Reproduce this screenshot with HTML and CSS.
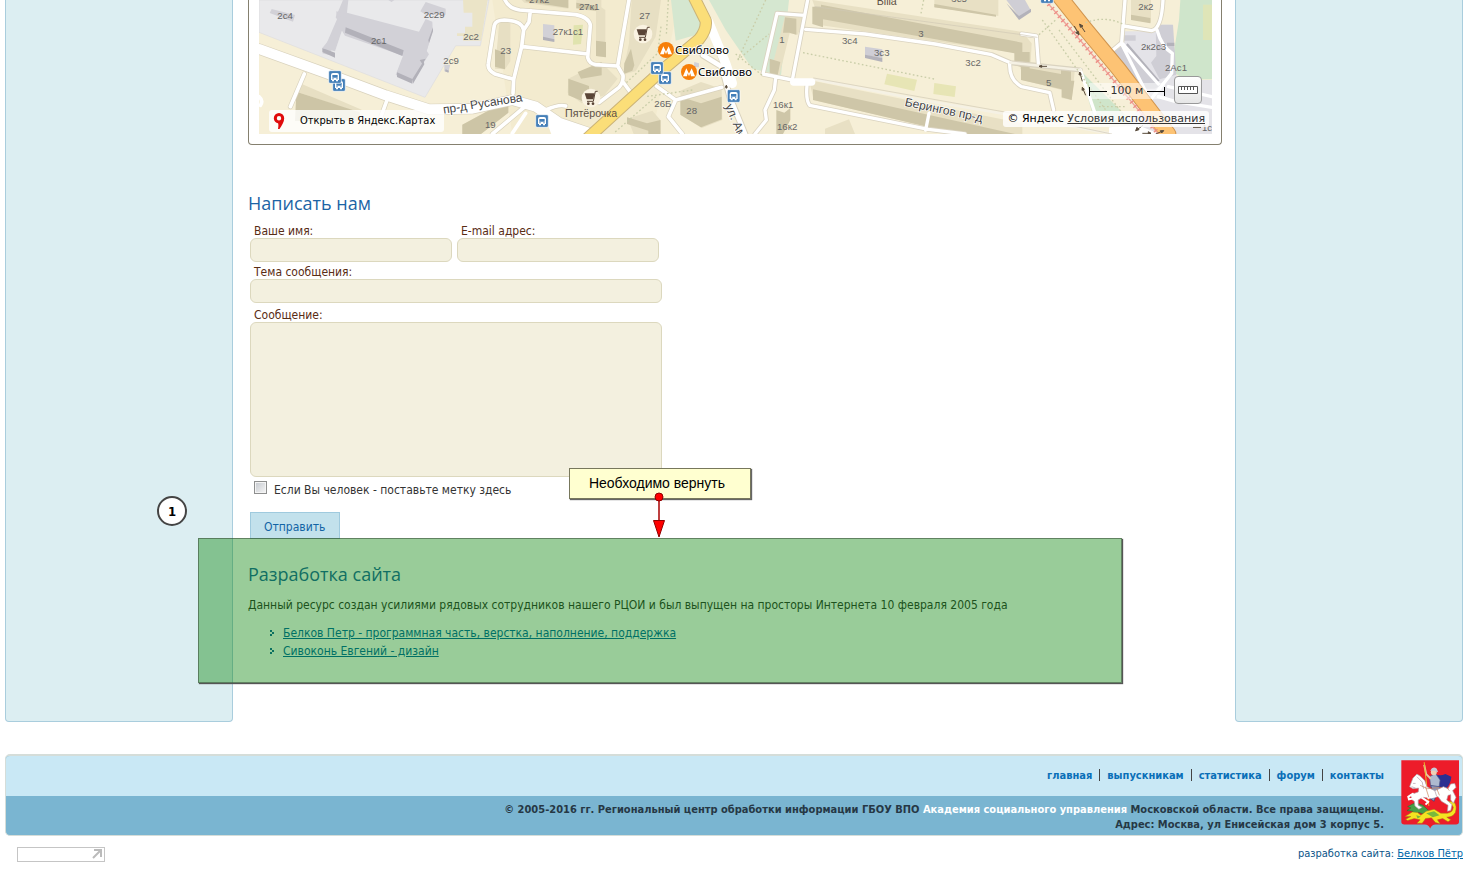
FILE: index.html
```html
<!DOCTYPE html>
<html lang="ru">
<head>
<meta charset="utf-8">
<title>Контакты</title>
<link rel="stylesheet" href="styles.css">
</head>
<body>
<div class="page">
  <div class="columns">
    <aside class="sidebar"></aside>
    <main class="content">
      <section class="map-box">
        <div class="map">
          <svg class="map-canvas" viewBox="0 0 2859 402" preserveAspectRatio="xMinYMin slice" aria-label="Карта">
            <defs>
              <g id="metro"><circle r="24" fill="#f77f09"/><path d="M-18 13L-8-11 0 5 8-11 18 13H6L4 4 0 13-4 4-6 13z" fill="#fff"/></g>
              <g id="bus"><rect x="-19" y="-19" width="38" height="38" rx="4" fill="#447fb8" stroke="#fff" stroke-width="2"/><path d="M-12-6q0-6 6-6H6q6 0 6 6V9H9v4H3V9h-6v4h-6V9h-3zM-8-6v8H8v-8zM-8 4v3h4V4zM4 4v3h4V4z" fill="#fff" fill-rule="evenodd"/></g>
              <g id="cart"><circle r="28" fill="#faf3e2"/><path d="M-19-14H11L7 4H-13Z" fill="#5a4537"/><path d="M20-20H13L7 10H-12" fill="none" stroke="#5a4537" stroke-width="3"/><circle cx="-8" cy="17" r="4" fill="#5a4537"/><circle cx="6" cy="17" r="4" fill="#5a4537"/></g>
            </defs>
            <rect width="2859" height="402" fill="#f6efd7"/>
            <path d="M700 0H1260L1180 402H760Z" fill="#f3ebcf"/>

            <!-- western half -->
            <path d="M0 0H690L664 137H590L498 292L0 97Z" fill="#e9e9eb" stroke="#dcdce0" stroke-width="2"/>
            <path d="M612 0h74l-20 122h-54v-14h-18v-8h24V80h22V38h-26z" fill="#ebe4c7"/>
            <path d="M1236 0H1325L1338 60L1310 105L1250 122Z M1350 0H1590L1566 226L1480 206L1400 90Z" fill="#d5e7d0"/>
            <g fill="#d2d1d7">
              <path d="M252 0h16l-4 38 216 57 20-38 20 8 1 28-18 60 7 10-18 28-32 50-50-16 22-58-174-60-10-16-38 74-20-5 44-102-4-6z"/>
              <path d="M252 82l-10 0-52 62 38 10zM436 165l-22 52 46 18 32-46 18-60-30-26z"/>
              <path d="M38 27l70 18-6 20-70-26zM484 34l16-28 60 20v18l-60 0zM852 72l34 4v46l-34-4zM556 194h18l-6 22-12-2zM1306 186l14 4v12h-16z"/>
              <path d="M388 0h18l-8 6zM232 34l38 10v10l-38-6z"/>
            </g>
            <g fill="#b2b1b9">
              <path d="M190 144l38 14v15l-38-17zM260 82l174 69-4 17-172-70zM414 217l46 20v14l-46-20zM460 237l34-54 2 10-34 58zM508 120l14-38v12l-12 36zM482 180l18-4-10 16zM852 110l34 8v8l-34-6zM560 208l10 4-2 6-10-4z"/>
            </g>
            <g fill="#e7dfc3">
              <path d="M112 275l18-22 178 76-6 10zM722 58l32-4v130l-16 24-30-2zM788 0h140v26L796 8zM952 0h75v22l12 8v142l-28-4V34l-60-8zM1118 0h88L1190 110 1130 214 1098 222 1096 196 1110 130zM928 236l98-50 50 50-40 50-68 24-42-32zM1106 356l74-24 26 30v40h-82zM1264 272l62-26 62 20 2 94-62 24-62-38zM610 374l120-66h18v30l-82 64h-56z"/>
            </g>
            <g fill="#cdc5a6">
              <path d="M112 275l190 62v26H108zM708 148l30 10v50l-30-8zM800 0h128v24L800 4zM952 8l60 10v14l-60-8zM1011 122l30 4v46l-30-4zM928 236l62 22v54l-62-26zM956 216l72-30v40l-62 10zM1096 190l20-44 10 50-6 16-26 10zM1104 352l60 18 40-10v42h-36v-10l-64-20zM1264 290l62 20 62-20v68l-62 24-62-38zM610 374l82-44 56-16v24l-82 64h-56z"/>
            </g>
            <path d="M944 76l28-2-6 58-24 2z" fill="#e0e3ae"/>

            <!-- eastern half -->
            <g transform="translate(1428 0)">
              <path d="M1140 402L1240 300 1120 160 1170 122 1170 94 1240 94 1280 74H1310L1326 240H1431V402Z" fill="#e4e3e8"/>
              <path d="M1336 0H1431V125L1410 120 1400 0H1431V238H1346L1308 210 1332 60Z" fill="#cfe5cb"/>
              <path d="M1404 14h27v106h-27z" fill="#dfe5b8"/>
              <path d="M1038 214L1196 370 1080 372Z" fill="#cfe5ca"/>
              <path d="M456 221l90 18-8 34-90-20zM598 249l65 10-4 32-64-9z" fill="#e7e5b5"/>
              <g fill="#e8e0c4">
                <path d="M232 0l630 96 28 34-4 78-30 0V160L258 76zM598 0h192v48L598 22zM150 48h62l-24 56-24-4-32 130-26-8zM222 240l640 130v32H670L236 300zM862 182l158 24-10 94-30-6v-24l-118-30zM1188 0h60v68l-60-10zM270 386l72-28 18 44h-90z"/>
              </g>
              <g fill="#cec6a8">
                <path d="M258 14l604 114v28h22v50l-46-10v-36L264 58v24l-32-10V20h26zM598 12l185 32v6L598 22zM104 176l32 10-8 40-24-6zM150 52l34 4v48l-20-6-20 0zM234 268L840 402H670L234 300zM858 200l120 22v-16h30v36h10l-8 58-30-8v-24l-122-28zM1188 44l58 10v16l-58-10zM124 330l24 8 18-14v36l-22 42h-20z"/>
              </g>
              <path d="M814 0h56l18 32-36 18zM390 140l52 8v26l-52-8zM1126 160l40-24 110 120-16 10H1210zM1262 74h52l10 150-50 14-26-50 16-20zM1166 106h36v16h-36z" fill="#cfced5"/>
              <path d="M814 10l38 38 36-22v10l-36 24zM390 164l52 10v12l-52-12zM1178 130l96 112-8 4-94-110zM1140 158l70 96-6 8-74-90zM1296 128h22v10h-22z" fill="#b3b2ba"/>
            </g>

            <!-- streets: soft edge first, then the white roadway -->
            <g fill="none" stroke-linejoin="round" stroke-linecap="round">
              <g stroke="#d9d2bd">
                <path d="M0 147L230 230 380 286 510 328 640 326 760 300 830 320 900 368 1000 402" stroke-width="34"/>
                <path d="M738 0Q750 26 782 30L950 44Q990 52 994 76L986 172Q990 190 1010 194L1076 198 1110 0M814 32L810 66 794 90M762 280L764 238 708 222Q684 210 688 190L706 76Q710 60 736 60Q790 62 794 90L788 140 764 238M792 140L986 162M1076 198L1092 226Q1094 246 1080 262L1020 308M1092 246L1120 284M1192 258L1250 300 1388 262M1250 300L1228 350 1270 402M136 222L94 320M384 300L366 350M800 318L700 402M860 330Q900 312 920 318" stroke-width="15"/>
                <path d="M1332 166L1388 200 1412 290 1458 402M1346 60L1390 180" stroke-width="20"/>
              </g>
              <g stroke="#fff">
                <path d="M0 147L230 230 380 286 510 328 640 326 760 300 830 320 900 368 1000 402" stroke-width="30"/>
                <path d="M860 350L1000 402H880Z" fill="#fff" stroke-width="6"/>
                <path d="M738 0Q750 26 782 30L950 44Q990 52 994 76L986 172Q990 190 1010 194L1076 198 1110 0M814 32L810 66 794 90M762 280L764 238 708 222Q684 210 688 190L706 76Q710 60 736 60Q790 62 794 90L788 140 764 238M792 140L986 162M1076 198L1092 226Q1094 246 1080 262L1020 308M1092 246L1120 284M1192 258L1250 300 1388 262M1250 300L1228 350 1270 402M136 222L94 320M384 300L366 350M800 318L700 402M860 330Q900 312 920 318M800 340L760 400M0 290Q14 302 4 316" stroke-width="11"/>
                <path d="M1332 166L1388 200 1412 290 1458 402" stroke-width="14"/>
                <path d="M1348 64L1375 130 1400 190 1420 250" stroke-width="28"/>
              </g>
              <g transform="translate(1428 0)">
                <g stroke="#dad3c0" stroke-width="15">
                  <path d="M208 46L126 40 84 222 172 240 218 0M212 88L390 102 600 132 770 164 826 188 1036 210M860 102L904 108 910 190M824 190Q822 240 860 260L944 278 956 330M122 234L118 270 90 330 94 360 60 402M216 256Q212 300 224 316L580 388 690 402M1170 0L1160 128 1122 160M1166 78L1250 92Q1280 86 1284 0"/>
                </g>
                <g stroke="#fff">
                  <path d="M208 46L126 40 84 222 172 240 218 0M212 88L390 102 600 132 770 164 826 188M860 102L904 108 910 190M824 190Q822 240 860 260L944 278 956 330M122 234L118 270 90 330 94 360 60 402M216 256Q212 300 224 316L580 388 690 402M582 340L572 390M1170 0L1160 128 1122 160M1166 78L1250 92Q1280 86 1284 0M1160 128L1270 252M1160 132L1240 290M1266 90Q1280 140 1312 160L1310 220 1246 300M1270 290L1320 304 1431 322M1036 210L1080 340M1300 260L1431 290" stroke-width="10"/>
                  <path d="M826 188L1036 210M240 238L560 300 860 350 1120 400" stroke="#f5f1e4" stroke-width="8"/>
                  <path d="M176 246H230" stroke-width="22"/>
                  <path d="M1124 402V384L1210 378 1270 402Z" fill="#fff" stroke-width="4"/>
                </g>
                <path d="M236 234L860 345 1130 402M240 20L860 104 906 112" stroke="#d0c9b5" stroke-width="2"/>
              </g>
              <path d="M1304 -10L1340 62Q1344 88 1320 118L1210 210 980 420" stroke="#cbb377" stroke-width="37"/>
              <path d="M1304 -10L1340 62Q1344 88 1320 118L1210 210 980 420" stroke="#fbde78" stroke-width="31"/>
              <g transform="translate(1428 0)">
                <path d="M966 -20L1052 88 1150 206 1300 402" stroke="#d1954f" stroke-width="48"/>
                <path d="M966 -20L1052 88 1150 206 1300 402" stroke="#fdc374" stroke-width="42"/>
                <path d="M930 0L1040 126 1270 402" stroke="#f0a49b" stroke-width="4"/>
                <path d="M930 0L1040 126 1270 402" stroke="#ee8e85" stroke-width="14" stroke-linecap="butt" stroke-dasharray="4 12"/>
              </g>
              <g stroke="#c9cda8" stroke-width="4" stroke-linecap="butt" stroke-dasharray="5 7">
                <path d="M1228 0L1222 104M1206 80L1196 160 1100 250M1300 270L1160 290M1190 290L1064 400M1520 0L1436 180M1436 180L1530 102M1430 162L1510 226M1632 158L2030 238M1994 0L1986 40M2340 104L2390 60M2350 60L2540 330M2400 90L2590 340M2480 68Q2540 46 2590 72M2520 320H2600"/>
              </g>
            </g>
            <g transform="translate(1428 0)" stroke="#5a4c3c" stroke-width="3" fill="#5a4c3c">
              <path d="M1018 78l14 26m0 0l-10-6 8-4zM1050 96l-16-24m0 0l2 10 8-4zM936 199h-24m0 0l8-3v6zM1052 286l-10-24m0 0l-1 9 7-3zM1042 244l-8-28m0 0l-2 9 7-2zM1202 392l22-16m-22 16l4-10 6 7zM1222 400h26m0 0l-8-5v8zM1262 402l24-10m0 0h-10l4 7zM1374 382h24"/>
              <path d="M-26 256v10m0-10l-3 6h6z"/>
            </g>

            <g class="map-numbers">
              <text x="55" y="56">2с4</text><text x="494" y="54">2с29</text><text x="336" y="132">2с1</text><text x="613" y="120">2с2</text><text x="553" y="192">2с9</text><text x="724" y="163">23</text><text x="678" y="384">19</text><text x="810" y="9">27к2</text><text x="881" y="105">27к1с1</text><text x="960" y="30">27к1</text><text x="1141" y="57">27</text><text x="1186" y="322">26Б</text><text x="1282" y="342">28</text><text x="1561" y="130">1</text><text x="1542" y="324">16к1</text><text x="1554" y="390">16к2</text><text x="1749" y="132">3с4</text><text x="1845" y="168">3с3</text><text x="1978" y="111">3</text><text x="2077" y="6">3с5</text><text x="2119" y="199">3с2</text><text x="2361" y="258">5</text><text x="2638" y="30">2к2</text><text x="2646" y="150">2к2с3</text><text x="2718" y="213">2Ас1</text><text x="2829" y="392">1с</text>
            </g>
            <g class="map-streets">
              <text transform="translate(554 341) rotate(-9)">пр-д Русанова</text>
              <text transform="translate(1936 317) rotate(12)">Берингов пр-д</text>
              <text transform="translate(1398 318) rotate(67)">ул. Ам</text>
            </g>
            <g class="map-places"><text x="918" y="350">Пятёрочка</text><text x="1853" y="14">Billa</text></g>
            <g class="map-metro"><text x="1248" y="162">Свиблово</text><text x="1317" y="228">Свиблово</text></g>
            <use href="#metro" x="1221" y="150"/><use href="#metro" x="1290" y="216"/>
            <use href="#bus" x="240" y="255"/><use href="#bus" x="228" y="231"/><use href="#bus" x="849" y="363"/><use href="#bus" x="1218" y="234"/><use href="#bus" x="1194" y="204"/><use href="#bus" x="1424" y="288"/><use href="#bus" x="2364" y="-9"/>
            <use href="#cart" x="1152" y="102"/><use href="#cart" x="996" y="294"/>
          </svg>
          <a class="map-open" href="#">
            <svg class="pin" viewBox="0 0 12 16"><path d="M6 0a5.200 5.200 0 0 1 5.200 5.200C11.200 9 9 12 6.500 16h-1.500C5.500 13 5.500 11 5 10.200 3 10 .8 8 .8 5.200A5.200 5.200 0 0 1 6 0zm0 3a2.200 2.200 0 1 0 0 4.400A2.200 2.200 0 0 0 6 3z" fill="#e00b0b" fill-rule="evenodd"/></svg>
            <span>Открыть в Яндекс.Картах</span>
          </a>
          <div class="map-scale"><span class="scale-line scale-start"></span><span>100 м</span><span class="scale-line scale-end"></span></div>
          <button class="map-ruler" type="button" aria-label="Измерение расстояний">
            <svg viewBox="0 0 20 8"><path d="M.5.500h19v7H.5zM3.500 1v3M6.500 1v3M9.500 1v3M12.500 1v3M15.500 1v3" fill="#fff" stroke="#555"/></svg>
          </button>
          <div class="map-copy">© Яндекс <a href="#">Условия использования</a></div>
        </div>
      </section>

      <section class="feedback">
        <h2>Написать нам</h2>
        <form class="form">
          <div class="form-row">
            <div class="field half"><label for="name">Ваше имя:</label><input id="name" type="text"></div>
            <div class="field half"><label for="email">E-mail адрес:</label><input id="email" type="text"></div>
          </div>
          <div class="field subject"><label for="subject">Тема сообщения:</label><input id="subject" type="text"></div>
          <div class="field"><label for="message">Сообщение:</label><textarea id="message"></textarea></div>
          <div class="human"><input id="human" type="checkbox"><label for="human">Если Вы человек - поставьте метку здесь</label></div>
          <button class="submit" type="button">Отправить</button>
        </form>
        <div class="note">Необходимо вернуть
          <svg class="arrow" viewBox="0 0 14 46"><path d="M7 5V29" stroke="#a80000" stroke-width="1.500"/><circle cx="7" cy="5" r="4" fill="#f00" stroke="#900000"/><path d="M1.500 28.500h11L7 45z" fill="#f00" stroke="#900000"/></svg>
        </div>
        <div class="marker">1</div>
      </section>

      <section class="credits">
        <h2>Разработка сайта</h2>
        <p>Данный ресурс создан усилиями рядовых сотрудников нашего РЦОИ и был выпущен на просторы Интернета 10 февраля 2005 года</p>
        <ul>
          <li><svg class="bullet" viewBox="0 0 5 7"><path d="M0 0h2v2H0zM2 2h2v2H2zM0 4h2v2H0z" fill="#1266a0"/></svg><a href="#">Белков Петр - программная часть, верстка, наполнение, поддержка</a></li>
          <li><svg class="bullet" viewBox="0 0 5 7"><path d="M0 0h2v2H0zM2 2h2v2H2zM0 4h2v2H0z" fill="#1266a0"/></svg><a href="#">Сивоконь Евгений - дизайн</a></li>
        </ul>
        <div class="highlight"></div>
      </section>
    </main>
    <aside class="sidebar"></aside>
  </div>

  <footer class="footer">
    <nav class="footer-nav"><a href="#">главная</a><i></i><a href="#">выпускникам</a><i></i><a href="#">статистика</a><i></i><a href="#">форум</a><i></i><a href="#">контакты</a></nav>
    <div class="footer-text">© 2005-2016 гг. Региональный центр обработки информации ГБОУ ВПО <a href="#">Академия социального управления</a> Московской области. Все права защищены.<br>Адрес: Москва, ул Енисейская дом 3 корпус 5.</div>
    <svg class="emblem" viewBox="8 12 175 207">
      <path d="M9 12H183V198Q183 206 174 206H112Q101 206 96 218Q91 206 80 206H18Q9 206 9 198Z" fill="#ed1c2a"/>
      <!-- dragon -->
      <g stroke="#a67a18" stroke-width="1.500">
        <path d="M96 168L74 148 52 140 28 152 38 156 26 164 44 166 38 176 62 170 82 176Z" fill="#47a047" stroke="#22672a"/>
        <path d="M20 182L42 168 58 170 68 178 84 166 108 160 128 172 148 172Q164 170 166 154L160 144 146 142 150 136 168 138Q178 150 172 170Q164 184 146 184L158 192 150 198 134 188 118 192 126 204 112 200 100 186 82 188 72 202 56 202 66 192 48 188 28 194 22 190 38 182Z" fill="#f5e321"/>
        <path d="M84 172L108 166 124 178 104 184ZM54 178L68 182 58 188Z" fill="#78b93c" stroke="none"/>
      </g>
      <!-- cape, rider -->
      <path d="M108 52Q124 62 142 54L160 62Q158 84 144 98L122 92 112 78Z" fill="#2b2f91"/>
      <path d="M94 62L112 52 126 72 122 98 98 94Z" fill="#aebbd0" stroke="#515b87" stroke-width="2"/>
      <path d="M98 88L124 92 126 110 114 116 108 136 96 128 104 108Z" fill="#8c98bb" stroke="#353d78" stroke-width="2"/>
      <circle cx="107" cy="48" r="9" fill="#f0cfb5"/><path d="M96 44Q104 28 116 38L120 48 108 44Z" fill="#c5cbd8"/>
      <path d="M98 68L84 54 78 26" fill="none" stroke="#e7c5a3" stroke-width="6"/>
      <path d="M78 18L92 150" stroke="#e6b832" stroke-width="3"/>
      <!-- horse -->
      <path d="M56 54L66 60 80 74 86 92 110 104 136 92 150 98 158 84 170 82 174 94 164 104 174 124 166 142 158 132 158 116 150 118 146 132 162 146 158 164 148 166 150 148 130 136 120 122 90 126 74 124 60 132 60 148 72 154 62 160 50 150 48 136 42 132 36 116 60 108 62 96 44 98 34 92 44 66Z" fill="#fff" stroke="#ad9ca6" stroke-width="2"/>
      <path d="M46 112L30 122 32 130 44 128M70 124L90 138 82 146M52 72L62 82 66 102M88 126L116 120M134 102L150 112" fill="none" stroke="#fff" stroke-width="6"/>
      <path d="M56 62L72 78 76 98M44 82H52M40 92L52 96M110 104L116 122" fill="none" stroke="#a997a4" stroke-width="2"/>
      <path d="M66 88L88 98 130 94M82 92L92 124M116 98L124 118M146 94L154 104" fill="none" stroke="#c78055" stroke-width="2"/>
    </svg>
  </footer>
  <div class="bottom">
    <div class="counter"><svg viewBox="0 0 10 10"><path d="M2 1h7v7M9 1L1 9" fill="none" stroke="#bbb" stroke-width="2"/></svg></div>
    <div class="dev">разработка сайта: <a href="#">Белков Пётр</a></div>
  </div>
</div>
</body>
</html>
```
FILE: styles.css
```css
* { box-sizing: border-box; }
body {
  margin: 0;
  background: #fff;
  color: #333;
  font: 12px/18px "DejaVu Sans Condensed", "Noto Sans", sans-serif;
}
a { color: #0066a8; }
.page { padding: 0 5px; }
.columns { display: grid; grid-template-columns: 228px 1fr 228px; }
.sidebar {
  background: #dceef2;
  border: 1px solid #a9cddd;
  border-top: 0;
  border-radius: 0 0 4px 4px;
}
.content { min-width: 0; padding: 0 13px 62px 15px; }

.map-box {
  padding: 0 9px 10px 10px;
  border: 1px solid #85806f;
  border-top: 0;
  border-radius: 0 0 4px 4px;
}
.map { position: relative; overflow: hidden; height: 134px; }
.map-canvas { display: block; width: 100%; height: 134px; }
.map-numbers { font: 29px "Liberation Sans", sans-serif; fill: #666; }
.map-streets { font: 36px "Liberation Sans", sans-serif; fill: #444; stroke: #fff; stroke-width: 4px; paint-order: stroke; }
.map-places { font: 32px "Liberation Sans", sans-serif; fill: #5d5045; }
.map-metro { font: 34px "Noto Sans", sans-serif; fill: #000; stroke: #fff; stroke-width: 5px; paint-order: stroke; }
.map-open {
  position: absolute; left: 10px; bottom: 2px;
  display: flex; align-items: center; gap: 15px;
  height: 22px; padding: 0 9px 0 4px;
  border-radius: 3px;
  background: rgba(255, 255, 255, .8);
  color: #000; font-size: 11px; text-decoration: none;
}
.pin { width: 12px; height: 16px; }
.map-scale {
  position: absolute; right: 47px; bottom: 35px;
  display: flex; align-items: center; gap: 4px;
  width: 76px; height: 16px;
  background: rgba(255, 255, 255, .5);
  color: #333; font: 11px/16px "DejaVu Sans", sans-serif; white-space: nowrap;
}
.scale-line { flex: 1; height: 9px; background: linear-gradient(#000, #000) 0 4px / 100% 1px no-repeat; }
.scale-start { border-left: 1px solid #000; }
.scale-end { border-right: 1px solid #000; }
.map-ruler {
  position: absolute; right: 10px; bottom: 30px;
  display: flex; align-items: center; justify-content: center;
  width: 28px; height: 28px; padding: 0;
  border: 1px solid #999; border-radius: 4px;
  background: linear-gradient(#fff, #e6e6e6);
}
.map-ruler svg { width: 20px; height: 8px; }
.map-copy {
  position: absolute; right: 3px; bottom: 7px;
  padding: 0 4px; border-radius: 3px;
  background: rgba(255, 255, 255, .8);
  color: #000; font: 11px/16px "DejaVu Sans", sans-serif;
}
.map-copy a { color: #333; }

h2 { margin: 0; color: #1c64a5; font: 18px/24px "Open Sans", sans-serif; }
.feedback { position: relative; padding-top: 46px; }
.form { width: 414px; padding: 9px 0 0 2px; }
.form-row { display: flex; gap: 5px; margin-bottom: 3px; }
.field { display: flex; flex-direction: column; }
.half { width: 202px; }
.subject { margin-bottom: 5px; }
.field label { padding-left: 4px; color: #592c14; line-height: 14px; }
.field input, .field textarea {
  width: 100%; height: 24px; margin: 0; padding: 2px 6px;
  border: 1px solid #dcd8be; border-radius: 6px;
  background: #f3f0df; font: inherit;
}
.field textarea { height: 155px; }
.human { display: flex; align-items: center; gap: 7px; height: 20px; margin: 3px 0 12px; padding-left: 4px; }
.human input {
  appearance: none; align-self: flex-start;
  width: 13px; height: 13px; margin: 1px 0 0;
  border: 1px solid #8e8f8f; outline: 1px solid #f4f4f4; outline-offset: -2px;
  background: linear-gradient(135deg, #c4c8ce, #f6f6f6);
}
.submit {
  display: block; height: 27px; padding: 2px 14px 0 13px;
  border: 1px solid #9fcade; background: #c2e1ec;
  color: #1264a5; font: 12px/24px "DejaVu Sans Condensed", "Noto Sans", sans-serif;
}
.note {
  position: absolute; left: 321px; bottom: 40px;
  width: 182px; height: 31px;
  padding-right: 6px;
  border: 1px solid #77775c; box-shadow: 1px 1px 1px #666;
  background: #ffffd0; color: #000;
  font: 14px/28px "Liberation Sans", sans-serif; text-align: center;
}
.arrow { position: absolute; left: 82px; top: 23px; width: 14px; height: 46px; z-index: 3; }
.marker {
  position: absolute; left: -91px; bottom: 13px;
  width: 30px; height: 30px;
  border: 2px solid #444; border-radius: 50%;
  background: #fff; color: #000;
  font: bold 13px/27px "DejaVu Sans Condensed", sans-serif; text-align: center;
}

.credits { position: relative; padding-top: 23px; }
.credits p { margin: 10px 0; }
.credits ul { margin: 0; padding: 0 0 0 22px; list-style: none; }
.credits li { display: flex; align-items: center; gap: 8px; }
.bullet { width: 5px; height: 7px; }
.highlight {
  position: absolute; left: -50px; right: 100px; top: -1px; height: 145px;
  border: 1px solid rgba(60, 80, 60, .6);
  box-shadow: 1px 1px 1px #555;
  background: rgba(0, 128, 0, .4);
  pointer-events: none;
}

.footer {
  position: relative; overflow: hidden;
  margin-top: 32px;
  border: 1px solid #d5ddd9; border-width: 2px 1px 1px;
  border-radius: 5px;
  background: #7ab5d1;
  text-align: right;
  font: bold 11px/15px "DejaVu Sans Condensed", "Noto Sans", sans-serif;
}
.footer-nav {
  display: flex; justify-content: flex-end; align-items: center; gap: 7px;
  height: 40px; padding: 0 78px 2px 0;
  background: #c9e8f5;
}
.footer-nav a { color: #0a6fb8; text-decoration: none; }
.footer-nav i { width: 1px; height: 12px; background: #444; }
.footer-text { padding: 6px 78px 3px 0; color: #263845; }
.footer-text a { color: #fff; text-decoration: none; }
.emblem { position: absolute; right: 3px; top: 4px; width: 58px; height: 69px; }
.bottom { display: flex; justify-content: space-between; align-items: center; padding: 9px 0 0 12px; }
.counter {
  display: flex; justify-content: flex-end; align-items: center;
  width: 88px; height: 15px; padding-right: 2px;
  border: 1px solid #c5c5c5;
}
.counter svg { width: 10px; height: 10px; }
.dev { color: #0b5488; font-size: 11px; }
```
